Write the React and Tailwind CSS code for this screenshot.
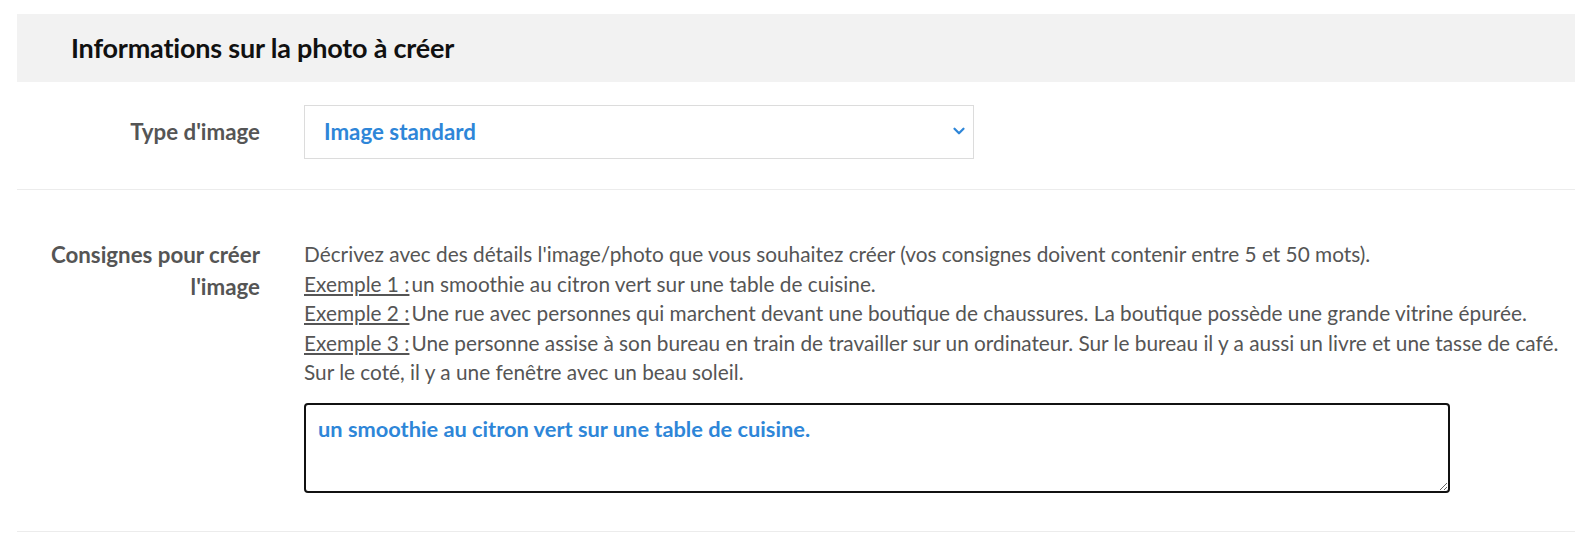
import { ChevronDown } from "lucide-react";

const examples = [
  { label: "Exemple 1 :", text: "un smoothie au citron vert sur une table de cuisine." },
  { label: "Exemple 2 :", text: "Une rue avec personnes qui marchent devant une boutique de chaussures. La boutique possède une grande vitrine épurée." },
  { label: "Exemple 3 :", text: "Une personne assise à son bureau en train de travailler sur un ordinateur. Sur le bureau il y a aussi un livre et une tasse de café." },
];

const App = () => {
  return (
    <div className="min-h-screen bg-white pt-[14px] pl-[17px] font-['Lato','Noto_Sans',sans-serif]">
      <div className="bg-[#f2f2f2] h-[68px] flex items-center pl-[54px]">
        <h2 className="text-[27px] font-bold text-[#111] tracking-[-0.2px]">Informations sur la photo à créer</h2>
      </div>

      <div className="flex items-center pt-[23px] pb-[30px] border-b border-[#ececec]">
        <label className="w-[243px] text-right text-[22.3px] font-bold text-[#555]">Type d'image</label>
        <div className="ml-[44px] w-[670px] h-[54px] border border-[#dcdcdc] flex items-center justify-between pl-[19px] pr-[5px]">
          <span className="text-[22.3px] font-bold text-[#2e86d8]">Image standard</span>
          <ChevronDown size={18} strokeWidth={3} className="text-[#2e86d8] -mt-[3px]" />
        </div>
      </div>

      <div className="flex pt-[49px] pb-[38px] border-b border-[#ececec]">
        <label className="w-[243px] text-right text-[22.3px] font-bold text-[#555] leading-[32px] pl-[20px]">
          Consignes pour créer l'image
        </label>
        <div className="ml-[44px] flex flex-col">
          <div className="text-[20.8px] leading-[29.5px] text-[#555]">
            <p>Décrivez avec des détails l'image/photo que vous souhaitez créer (vos consignes doivent contenir entre 5 et 50 mots).</p>
            {examples.map((ex) => (
              <p key={ex.label}>
                <span className="underline underline-offset-2">{ex.label}</span>
                <span className="ml-[2px]">{ex.text}</span>
              </p>
            ))}
            <p>Sur le coté, il y a une fenêtre avec un beau soleil.</p>
          </div>
          <textarea
            className="mt-[16px] w-[1146px] h-[90px] border-2 border-[#111] rounded-[4px] px-[12px] pt-[8px] text-[21.8px] font-bold text-[#2e86d8] caret-[#2e86d8] outline-none resize"
            defaultValue="un smoothie au citron vert sur une table de cuisine."
          />
        </div>
      </div>
    </div>
  );
};

export default App;
